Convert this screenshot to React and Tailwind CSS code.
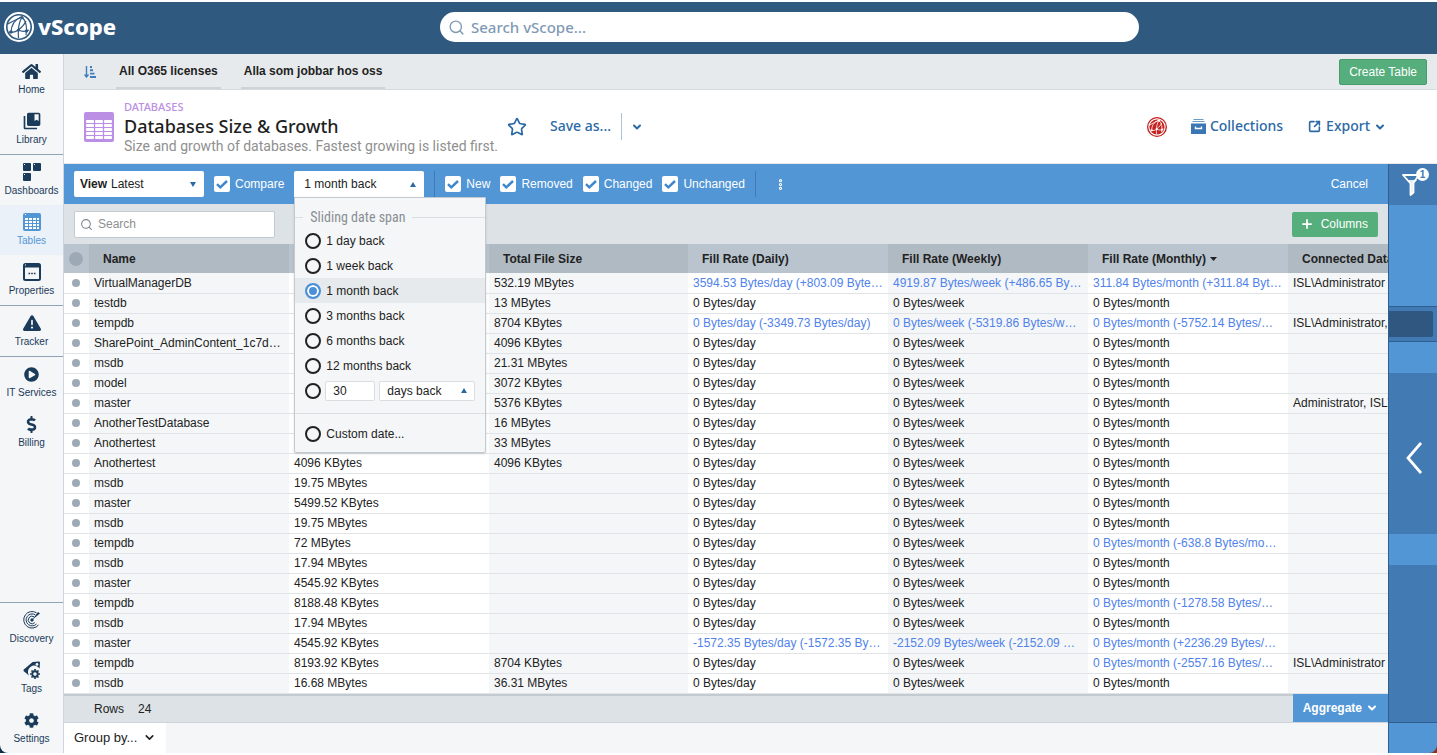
import { useState } from 'react'
import { Search, Star, Plus, ChevronDown, EllipsisVertical, SquareArrowOutUpRight } from 'lucide-react'
import { FaHome, FaPlayCircle, FaDollarSign, FaCog } from 'react-icons/fa'
import { FaTriangleExclamation } from 'react-icons/fa6'
import { MdCollectionsBookmark } from 'react-icons/md'

function GridIcon() {
  return (
    <svg width="18" height="18" viewBox="0 0 18 18" fill="currentColor">
      <rect x="0" y="0" width="8" height="8" rx="1" />
      <rect x="10" y="0" width="8" height="8" rx="1" />
      <rect x="0" y="10" width="8" height="8" rx="1" />
      <g fill="#f4f6f8">
        <rect x="1" y="1" width="1" height="1" />
        <rect x="11" y="1" width="1" height="1" />
        <rect x="1" y="11" width="1" height="1" />
      </g>
    </svg>
  )
}

function TableIcon() {
  return (
    <svg width="18" height="18" viewBox="0 0 18 18">
      <rect width="18" height="18" rx="2" fill="currentColor" />
      <g fill="#fff">
        {[5, 8, 11, 14].map((y) =>
          [2, 6, 10, 14].map((x) => <rect key={`${x}-${y}`} x={x} y={y} width={x === 14 ? 2 : 3} height="2" />)
        )}
        <rect x="2" y="1" width="1" height="1" />
      </g>
    </svg>
  )
}

function PropertiesIcon() {
  return (
    <svg width="18" height="18" viewBox="0 0 18 18">
      <rect x="1" y="1" width="16" height="16" rx="1.5" fill="none" stroke="currentColor" strokeWidth="2" />
      <rect x="1" y="1" width="16" height="3.5" fill="currentColor" />
      <path d="M5.5 10.5h1.6M8.2 10.5h1.6M10.9 10.5h1.6" stroke="currentColor" strokeWidth="1.5" />
      <rect x="2" y="1.5" width="1" height="1" fill="#fff" />
    </svg>
  )
}

function DiscoveryIcon() {
  return (
    <svg width="18" height="18" viewBox="0 0 18 18" fill="none" stroke="currentColor" strokeWidth="1">
      <path d="M13.5 1.8A8.3 8.3 0 1 0 15.5 14" />
      <path d="M12.3 3.8A6 6 0 1 0 13.5 13" />
      <path d="M11 5.7A3.8 3.8 0 1 0 11.8 11.6" />
      <circle cx="9" cy="9" r="1.2" fill="currentColor" />
      <path d="M9 9L17 2.6L15 1Z" fill="currentColor" stroke="none" />
    </svg>
  )
}

function TagsIcon() {
  return (
    <svg width="18" height="18" viewBox="0 0 18 18">
      <path d="M9.600 1L15.8 0.4Q17 0.4 17 1.6L16.6 7.4A6 6 0 0 0 6 14.6L0.8 10.2Q0 9.4 0.8 8.6Z" fill="currentColor" />
      <circle cx="14" cy="3.4" r="1.4" fill="#f4f6f8" />
      <g transform="translate(12 13)" stroke="currentColor" fill="none">
        <circle r="2.7" strokeWidth="1.9" />
        <path d="M0-3.2V-5M0 3.2V5M-3.2 0H-5M3.2 0H5M-2.3-2.3L-3.5-3.5M2.3 2.3L3.5 3.5M-2.3 2.3L-3.5 3.5M2.3-2.3L3.5-3.5" strokeWidth="1.7" />
      </g>
    </svg>
  )
}

function GlobeLogo({ size, line }) {
  return (
    <svg width={size} height={size} viewBox="0 0 30 30" aria-hidden="true">
      <circle cx="15" cy="15" r="14" fill={line} stroke="currentColor" strokeWidth="2" />
      <circle cx="15" cy="15" r="11.400" fill="currentColor" />
      <g fill="none" stroke={line} strokeWidth="1.200">
        <path d="M17 5C10 8 7 13 7 21" />
        <path d="M18 5C15 10 13.500 15 14.500 26" />
        <path d="M18 5C22 9 23.500 15 22 23" />
        <path d="M4 12C8 9 14 7 18 5" />
        <path d="M5 20C10 21 12 20 14.500 18C18 15 21 12 22 9" />
        <path d="M14.500 18C18 20 21 20 25 18" />
      </g>
      <g fill={line}>
        <circle cx="18" cy="5.500" r="1.500" />
        <circle cx="7" cy="20" r="1.700" />
        <circle cx="14.500" cy="18" r="1.600" />
        <circle cx="22.500" cy="19" r="1.700" />
      </g>
    </svg>
  )
}

function Caret({ up, className }) {
  return (
    <svg width="6" height="5" viewBox="0 0 6 5" fill="currentColor" className={className} aria-hidden="true">
      <path d={up ? 'M0 5L3 0L6 5Z' : 'M0 0L3 5L6 0Z'} />
    </svg>
  )
}

const NAV_TOP = [
  [
    { label: 'Home', icon: <FaHome size={19} /> },
    { label: 'Library', icon: <MdCollectionsBookmark size={20} /> },
  ],
  [
    { label: 'Dashboards', icon: <GridIcon /> },
    { label: 'Tables', icon: <TableIcon />, active: true },
    { label: 'Properties', icon: <PropertiesIcon /> },
  ],
  [{ label: 'Tracker', icon: <FaTriangleExclamation size={18} /> }],
  [
    { label: 'IT Services', icon: <FaPlayCircle size={15} /> },
    { label: 'Billing', icon: <FaDollarSign size={17} /> },
  ],
]

const NAV_BOTTOM = [
  { label: 'Discovery', icon: <DiscoveryIcon /> },
  { label: 'Tags', icon: <TagsIcon /> },
  { label: 'Settings', icon: <FaCog size={15} /> },
]

const FILTERS = ['New', 'Removed', 'Changed', 'Unchanged']

const SPANS = ['1 day back', '1 week back', '1 month back', '3 months back', '6 months back', '12 months back']

// name, used, total, daily, weekly, monthly, connected
const ROWS = [
  ['VirtualManagerDB', '', '532.19 MBytes', '3594.53 Bytes/day (+803.09 Bytes/day)', '4919.87 Bytes/week (+486.65 Bytes/week)', '311.84 Bytes/month (+311.84 Bytes/month)', 'ISL\\Administrator'],
  ['testdb', '', '13 MBytes', '', '', '', ''],
  ['tempdb', '', '8704 KBytes', '0 Bytes/day (-3349.73 Bytes/day)', '0 Bytes/week (-5319.86 Bytes/week)', '0 Bytes/month (-5752.14 Bytes/month)', 'ISL\\Administrator, ISL'],
  ['SharePoint_AdminContent_1c7d4e92', '', '4096 KBytes', '', '', '', ''],
  ['msdb', '', '21.31 MBytes', '', '', '', ''],
  ['model', '', '3072 KBytes', '', '', '', ''],
  ['master', '', '5376 KBytes', '', '', '', 'Administrator, ISL\\Admin'],
  ['AnotherTestDatabase', '', '16 MBytes', '', '', '', ''],
  ['Anothertest', '', '33 MBytes', '', '', '', ''],
  ['Anothertest', '4096 KBytes', '4096 KBytes', '', '', '', ''],
  ['msdb', '19.75 MBytes', '', '', '', '', ''],
  ['master', '5499.52 KBytes', '', '', '', '', ''],
  ['msdb', '19.75 MBytes', '', '', '', '', ''],
  ['tempdb', '72 MBytes', '', '', '', '0 Bytes/month (-638.8 Bytes/month)', ''],
  ['msdb', '17.94 MBytes', '', '', '', '', ''],
  ['master', '4545.92 KBytes', '', '', '', '', ''],
  ['tempdb', '8188.48 KBytes', '', '', '', '0 Bytes/month (-1278.58 Bytes/month)', ''],
  ['msdb', '17.94 MBytes', '', '', '', '', ''],
  ['master', '4545.92 KBytes', '', '-1572.35 Bytes/day (-1572.35 Bytes/day)', '-2152.09 Bytes/week (-2152.09 Bytes/week)', '0 Bytes/month (+2236.29 Bytes/month)', ''],
  ['tempdb', '8193.92 KBytes', '8704 KBytes', '', '', '0 Bytes/month (-2557.16 Bytes/month)', 'ISL\\Administrator'],
  ['msdb', '16.68 MBytes', '36.31 MBytes', '', '', '', ''],
]

const EMPTY_RATE = { 3: '0 Bytes/day', 4: '0 Bytes/week', 5: '0 Bytes/month' }

function NavItem({ item }) {
  return (
    <a
      href="#"
      className={`flex h-[50px] flex-col items-center gap-px pt-[7px] text-[10px] leading-4 ${
        item.active ? 'bg-[#eaf1f8] text-[#5296d6]' : 'text-[#1b3b5a]'
      }`}
    >
      <span className="flex h-5 items-center">{item.icon}</span>
      {item.label}
    </a>
  )
}

function Check({ label }) {
  return (
    <label className="flex items-center gap-[5px] text-white">
      <span className="grid place-items-center *:col-start-1 *:row-start-1">
        <input type="checkbox" defaultChecked className="peer size-4 appearance-none rounded-xs bg-white" />
        <svg width="12" height="9" viewBox="0 0 12 9" className="pointer-events-none hidden peer-checked:block">
          <path d="M1 4.200L4.300 7.300L11 1" fill="none" stroke="#3f87cc" strokeWidth="2.500" />
        </svg>
      </span>
      {label}
    </label>
  )
}

const RADIO =
  'size-4 shrink-0 appearance-none rounded-full border-2 border-[#222] checked:border-[#4a90d9] checked:bg-[#4a90d9] checked:shadow-[inset_0_0_0_2px_white]'

function SpanMenu({ span, onChange }) {
  return (
    <div className="absolute top-full left-0 z-10 w-48 rounded-b-xs border border-[#c3c9ce] bg-[#f4f6f8] pb-[3px] text-[#222] shadow">
      <div className="flex h-[30px] items-center gap-1 pt-2 font-['Liberation_Sans_Narrow','Roboto_Condensed',sans-serif] text-[14px] text-[#8a8f94]">
        <span className="h-px w-2 bg-[#dadee1]" />
        <span className="px-[3px]">Sliding date span</span>
        <span className="h-px flex-1 bg-[#dadee1]" />
      </div>
      {SPANS.map((s) => (
        <label key={s} className={`flex h-[25px] items-center gap-[5px] px-[10px] ${span === s ? 'bg-[#e6eaed]' : ''}`}>
          <input type="radio" name="span" checked={span === s} onChange={() => onChange(s)} className={RADIO} />
          {s}
        </label>
      ))}
      <div className="flex h-[25px] items-center px-[10px]">
        <input type="radio" name="span" aria-label="Custom number of days" checked={span === 'n'} onChange={() => onChange('n')} className={RADIO} />
        <input aria-label="Number of days" defaultValue="30" className="ml-1 h-5 w-[50px] rounded-xs border border-[#dadee1] bg-white px-[7px]" />
        <span className="ml-1 grid flex-1 items-center *:col-start-1 *:row-start-1">
          <select aria-label="Unit" className="h-5 w-full appearance-none rounded-xs border border-[#dadee1] bg-white px-[7px]">
            <option>days back</option>
          </select>
          <Caret up className="pointer-events-none mr-2 justify-self-end text-[#2a69a6]" />
        </span>
      </div>
      <label className="mt-[10px] flex h-9 items-center gap-[5px] border-t border-[#dadee1] px-[10px] pt-1">
        <input type="radio" name="span" checked={span === 'c'} onChange={() => onChange('c')} className={RADIO} />
        Custom date...
      </label>
    </div>
  )
}

function DataTable() {
  return (
    <div className="overflow-hidden">
      <table className="w-full min-w-[1424px] table-fixed text-left text-[#222]">
        <colgroup>
          <col className="w-[25px]" />
          <col className="w-[200px]" />
          <col className="w-[200px]" />
          <col className="w-[199px]" />
          <col className="w-[200px]" />
          <col className="w-[200px]" />
          <col className="w-[200px]" />
          <col />
        </colgroup>
        <thead>
          <tr className="h-[29px] *:px-[14px] *:even:bg-[#b0bac3] *:odd:bg-[#b9c4ce]">
            <th className="!px-[5px]">
              <span className="block size-[14px] rounded-full bg-[#9daab5]" />
            </th>
            <th>Name</th>
            <th />
            <th>Total File Size</th>
            <th>Fill Rate (Daily)</th>
            <th>Fill Rate (Weekly)</th>
            <th>
              <span className="flex items-center gap-1">
                Fill Rate (Monthly)
                <svg width="7" height="4" viewBox="0 0 7 4">
                  <path d="M0 0H7L3.500 4Z" fill="#222" />
                </svg>
              </span>
            </th>
            <th className="whitespace-nowrap">Connected Database Users</th>
          </tr>
        </thead>
        <tbody>
          {ROWS.map((row, i) => (
            <tr key={i} className="h-5 border-b border-[#e1e4e7] *:even:bg-[#f4f6f8] *:odd:bg-white">
              <td className="px-2">
                <span className="block size-2 rounded-full bg-[#9daab5]" />
              </td>
              {row.map((cell, j) => (
                <td key={j} className={`truncate px-[5px] ${j > 2 && j < 6 && cell ? 'text-[#4f82ea]' : ''}`}>
                  {cell || EMPTY_RATE[j]}
                </td>
              ))}
            </tr>
          ))}
        </tbody>
      </table>
    </div>
  )
}

function SideRail() {
  return (
    <aside className="flex w-[49px] shrink-0 bg-[#8c2f1c]">
      <div className="flex flex-1 flex-col overflow-hidden rounded-br-lg border-l border-[#2f5f90] bg-[#5296d6] text-white">
        <button aria-label="Filters" className="relative flex h-[41px] items-center bg-[#427ab3] pl-[13px]">
          <svg width="20" height="24" viewBox="0 0 20 24">
            <path d="M1 2H17L11.500 9.500V19.500L8.500 22V10.500Z" fill="none" stroke="#fff" strokeWidth="1.800" strokeLinejoin="round" />
            <path d="M6 7H15L11.500 11V20L8.500 22V10.500Z" fill="#fff" opacity="0.850" />
          </svg>
          <span className="absolute top-1 right-2 flex size-[13px] items-center justify-center rounded-full bg-white text-[10px] font-bold text-[#427ab3]">
            1
          </span>
        </button>
        <div className="h-[101px]" />
        <div className="h-9 border-y border-[#2f5f90] bg-[#427ab3] py-1 pr-1">
          <div className="h-full rounded-r-xs bg-[#2f5780]" />
        </div>
        <div className="h-[31px]" />
        <button aria-label="Expand panel" className="flex h-[161px] items-center justify-center bg-[#427ab3] pt-2 pl-[2px]">
          <svg width="16" height="32" viewBox="0 0 16 32">
            <path d="M15 1L2 16L15 31" fill="none" stroke="#fff" strokeWidth="2.800" />
          </svg>
        </button>
        <div className="h-[31px]" />
        <div className="flex-1 bg-[#427ab3]" />
        <div className="h-[31px] border-t border-[#2f5f90]" />
      </div>
    </aside>
  )
}

export default function App() {
  const [span, setSpan] = useState('1 month back')
  const [open, setOpen] = useState(true)

  return (
    <div className="flex min-h-screen flex-col bg-white py-[2px] font-['Liberation_Sans',Arial,sans-serif] text-xs text-[#222]">
      {/* Header */}
      <header className="flex h-[52px] items-center bg-[#30597f] pb-[2px]">
        <a href="#" className="flex w-[440px] items-center gap-1 pl-1 text-white">
          <GlobeLogo size={30} line="#30597f" />
          <span className="font-['Noto_Sans',sans-serif] text-[22px] font-extrabold">vScope</span>
        </a>
        <label className="flex h-[30px] flex-1 items-center gap-[6px] rounded-full bg-white px-2 text-[#7f9ab5]">
          <Search size={17} strokeWidth={2} />
          <input
            aria-label="Search vScope"
            placeholder="Search vScope..."
            className="flex-1 font-['Noto_Sans',sans-serif] text-[15px] font-medium outline-none placeholder:text-[#7f9ab5]"
          />
        </label>
        <div className="w-[298px]" />
      </header>

      <div className="flex flex-1">
        {/* Sidebar */}
        <div className="flex w-16 shrink-0 bg-[#0d2f4d]">
          <nav className="flex flex-1 flex-col rounded-bl-lg border-r border-[#ccd5de] bg-[#f4f6f8]">
            {NAV_TOP.map((group, i) => (
              <div key={i} className={i > 0 ? 'border-t border-[#8fa3b6]' : ''}>
                {group.map((item) => (
                  <NavItem key={item.label} item={item} />
                ))}
              </div>
            ))}
            <div className="mt-auto border-t border-[#8fa3b6]">
              {NAV_BOTTOM.map((item) => (
                <NavItem key={item.label} item={item} />
              ))}
            </div>
          </nav>
        </div>

        <div className="flex min-w-0 flex-1 flex-col">
          {/* Pinned tables */}
          <div className="flex h-9 items-center gap-5 border-b border-[#d5dadf] bg-[#e6eaed] pr-[10px] pl-5">
            <button aria-label="Sort" className="text-[#3f7fbd]">
              <svg width="12" height="12" viewBox="0 0 12 12" fill="none" stroke="currentColor">
                <path d="M2.500 0V11M0.500 8.500L2.500 11L4.500 8.500" strokeWidth="1.400" />
                <path d="M6 1H8M6 4.300H9M6 7.600H10.500M6 11H12" strokeWidth="1.900" />
              </svg>
            </button>
            <a href="#" className="flex h-full items-center border-b-2 border-[#cdd3d8] px-[3px] font-bold">All O365 licenses</a>
            <a href="#" className="flex h-full items-center border-b-2 border-[#cdd3d8] px-[3px] font-bold">Alla som jobbar hos oss</a>
            <button className="ml-auto h-[26px] rounded-xs border border-[#489b6c] bg-[#55ae7b] px-[9px] text-white">Create Table</button>
          </div>

          {/* Title */}
          <div className="flex h-[74px] items-center border-b border-[#e6eaed] pl-5 font-['Noto_Sans',sans-serif] text-[14px] font-medium text-[#2a69a6]">
            <svg width="30" height="30" viewBox="0 0 30 30" className="mr-[10px] shrink-0">
              <rect width="30" height="30" rx="2" fill="#bb8fe3" />
              <g fill="#fff">
                {[8, 12, 16, 20, 24].map((y) =>
                  [2, 11, 20].map((x) => <rect key={`${x}-${y}`} x={x} y={y} width="8" height="3" rx="1" />)
                )}
              </g>
            </svg>
            <div>
              <div className="text-[11px] leading-[14px] text-[#bb8fe3]">DATABASES</div>
              <h1 className="text-[18px] leading-6 text-[#1f1f1f]">Databases Size &amp; Growth</h1>
              <p className="font-['Roboto',sans-serif] text-[14px] leading-4 font-normal text-[#8f8f8f]">
                Size and growth of databases. Fastest growing is listed first.
              </p>
            </div>
            <button aria-label="Favourite" className="ml-[9px]">
              <Star size={20} strokeWidth={2} />
            </button>
            <button className="ml-[23px] border-r border-[#a9c3dc] py-1 pr-[10px]">Save as...</button>
            <button aria-label="More save options" className="ml-[9px]">
              <ChevronDown size={12} strokeWidth={4} />
            </button>
            <button aria-label="vScope" className="ml-auto text-[#c4221f]">
              <GlobeLogo size={20} line="#fff" />
            </button>
            <button className="ml-6 flex items-center gap-1">
              <svg width="15" height="15" viewBox="0 0 15 15">
                <path d="M2.500 0.500H12.500M1.500 2.500H13.500" stroke="#6c9bc8" strokeWidth="1.200" />
                <path d="M0 4.500H15V15H0Z" fill="#3a76b3" />
                <path d="M4.500 7.500V9.500H10.500V7.500" fill="none" stroke="#fff" strokeWidth="1.400" />
              </svg>
              Collections
            </button>
            <button className="mr-[51px] ml-[25px] flex items-center gap-1">
              <SquareArrowOutUpRight size={13} strokeWidth={3} className="mr-[1px]" />
              Export
              <ChevronDown size={12} strokeWidth={4} />
            </button>
          </div>

          <div className="flex flex-1">
            <main className="flex min-w-0 flex-1 flex-col">
              {/* Compare bar */}
              <div className="flex h-10 items-center gap-[10px] bg-[#5296d6] pr-5 pl-[10px]">
                <label className="grid w-[130px] items-center *:row-start-1">
                  <span className="z-1 col-start-1 pl-[6px] font-bold">View</span>
                  <select className="col-start-1 h-[26px] w-full appearance-none rounded-xs bg-white pl-[37px]">
                    <option>Latest</option>
                  </select>
                  <Caret className="pointer-events-none col-start-1 mr-2 justify-self-end text-[#2a69a6]" />
                </label>
                <Check label="Compare" />
                <div className="relative">
                  <button
                    aria-expanded={open}
                    onClick={() => setOpen(!open)}
                    className="flex h-[26px] w-[130px] items-center justify-between rounded-t-xs bg-white pr-2 pl-[10px]"
                  >
                    {SPANS.includes(span) ? span : 'Custom'}
                    <Caret up={open} className="text-[#2a69a6]" />
                  </button>
                  {open && <SpanMenu span={span} onChange={setSpan} />}
                </div>
                <span className="h-[26px] w-px bg-[#427ab3]" />
                {FILTERS.map((f) => (
                  <Check key={f} label={f} />
                ))}
                <span className="h-[26px] w-px bg-[#427ab3]" />
                <button aria-label="More" className="ml-2 text-white">
                  <EllipsisVertical size={13} strokeWidth={4} />
                </button>
                <button className="ml-auto text-white">Cancel</button>
              </div>

              {/* Table toolbar */}
              <div className="flex h-10 items-center justify-between bg-[#dde2e6] px-[10px]">
                <label className="flex h-[27px] w-[201px] items-center gap-[5px] rounded-xs border border-[#c3cad0] bg-white px-[5px] text-[#7c868f]">
                  <Search size={13} strokeWidth={2} />
                  <input aria-label="Search table" placeholder="Search" className="min-w-0 flex-1 outline-none placeholder:text-[#8f8f8f]" />
                </label>
                <button className="flex h-[25px] items-center gap-[7px] rounded-xs bg-[#55ae7b] px-2 pr-[10px] text-white">
                  <Plus size={14} strokeWidth={3} />
                  Columns
                </button>
              </div>

              <DataTable />

              {/* Summary */}
              <div className="flex h-[29px] items-stretch border-b border-[#cdd3d8] bg-[#dde2e6]">
                <div className="flex flex-1 items-center gap-[14px] border-t-2 border-[#c3cad0] pl-[30px]">
                  <span>Rows</span>
                  <span>24</span>
                </div>
                <button className="flex items-center gap-1 bg-[#5296d6] px-[10px] font-bold text-white">
                  Aggregate
                  <ChevronDown size={12} strokeWidth={4} />
                </button>
              </div>
              <div className="flex flex-1 bg-[#f4f6f8]">
                <button className="flex h-[30px] w-[102px] items-center gap-[6px] bg-white pl-[10px] text-[13px]">
                  Group by...
                  <ChevronDown size={13} strokeWidth={3} />
                </button>
              </div>
            </main>
            <SideRail />
          </div>
        </div>
      </div>
    </div>
  )
}
